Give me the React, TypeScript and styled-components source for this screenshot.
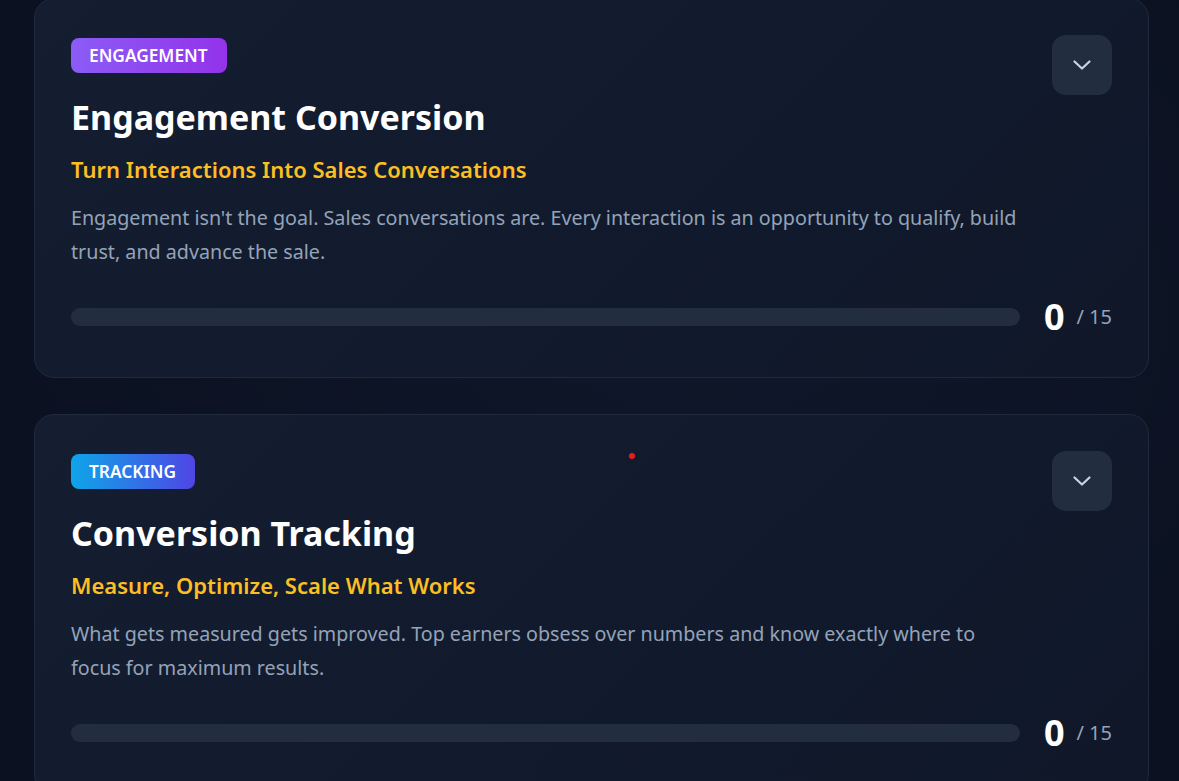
import React from "react";
import styled, { createGlobalStyle } from "styled-components";

const Global = createGlobalStyle`
  html, body { margin: 0; padding: 0; }
  body {
    background: #0b1120;
    font-family: "Noto Sans", "Open Sans", sans-serif;
    overflow: hidden;
  }
`;

const Page = styled.div`
  position: relative;
  display: flex;
  flex-direction: column;
  gap: 36px;
  padding: 0 30px 0 34px;
  margin-top: -2px;
  min-height: 781px;
  background: radial-gradient(ellipse at 60% 40%, #0f172a 0%, #0b1120 70%);
`;

const Card = styled.section`
  position: relative;
  border: 1px solid #1f2a3c;
  border-radius: 20px;
  background: linear-gradient(135deg, #151d30 0%, #111a2c 60%, #0f1729 100%);
  padding: 36px 36px 40px;
  display: flex;
  flex-direction: column;
`;

const Header = styled.div`
  display: flex;
  justify-content: space-between;
  align-items: flex-start;
`;

const Left = styled.div`
  display: flex;
  flex-direction: column;
  align-items: flex-start;
`;

const Badge = styled.span<{ $from: string; $to: string }>`
  margin-top: 3px;
  display: inline-flex;
  align-items: center;
  height: 35px;
  padding: 0 19px 0 18px;
  border-radius: 8px;
  background: linear-gradient(90deg, ${(p) => p.$from}, ${(p) => p.$to});
  color: #ffffff;
  font-size: 17.3px;
  font-weight: 600;
  text-transform: uppercase;
`;

const Title = styled.h2`
  margin: 22px 0 0;
  color: #ffffff;
  font-size: 34px;
  font-weight: 700;
  line-height: 44px;
`;

const Subtitle = styled.h3`
  margin: 16px 0 0;
  color: #fbbf24;
  font-size: 22px;
  font-weight: 600;
  line-height: 28px;
`;

const Desc = styled.p`
  margin: 18px 0 0;
  max-width: 952px;
  color: #94a3b8;
  font-size: 19.7px;
  line-height: 34px;
`;

const ToggleButton = styled.button`
  width: 60px;
  height: 60px;
  border: none;
  border-radius: 14px;
  background: #222d40;
  display: flex;
  align-items: center;
  justify-content: center;
  color: #cbd5e1;
  cursor: pointer;
  flex-shrink: 0;
`;

const ProgressRow = styled.div`
  margin-top: 28px;
  display: flex;
  align-items: center;
  gap: 24px;
`;

const Track = styled.div`
  flex: 1;
  height: 18px;
  border-radius: 9px;
  background: #222d40;
  overflow: hidden;
`;

const Fill = styled.div`
  height: 100%;
  background: linear-gradient(90deg, #8b5cf6, #3b82f6);
`;

const Count = styled.div`
  display: flex;
  align-items: center;
  gap: 12px;
  white-space: nowrap;
`;

const Done = styled.span`
  color: #ffffff;
  font-size: 36px;
  font-weight: 700;
  line-height: 40px;
`;

const Total = styled.span`
  color: #94a3b8;
  font-size: 20px;
  line-height: 28px;
`;

const Dot = styled.span`
  position: absolute;
  left: 629px;
  top: 455px;
  width: 6px;
  height: 6px;
  border-radius: 50%;
  background: #ef1a1a;
`;

const Chevron = () => (
  <svg width="20" height="12" viewBox="0 0 20 12" fill="none" stroke="currentColor" strokeWidth="2.2" strokeLinecap="round" strokeLinejoin="round">
    <path d="M2.5 2.5 L10 9.5 L17.5 2.5" />
  </svg>
);

type Module = {
  tag: string;
  from: string;
  to: string;
  title: string;
  subtitle: string;
  desc: string;
  done: number;
  total: number;
};

const modules: Module[] = [
  {
    tag: "Engagement",
    from: "#8b5cf6",
    to: "#9333ea",
    title: "Engagement Conversion",
    subtitle: "Turn Interactions Into Sales Conversations",
    desc: "Engagement isn't the goal. Sales conversations are. Every interaction is an opportunity to qualify, build trust, and advance the sale.",
    done: 0,
    total: 15,
  },
  {
    tag: "Tracking",
    from: "#0ea5e9",
    to: "#4f46e5",
    title: "Conversion Tracking",
    subtitle: "Measure, Optimize, Scale What Works",
    desc: "What gets measured gets improved. Top earners obsess over numbers and know exactly where to focus for maximum results.",
    done: 0,
    total: 15,
  },
];

export default function App() {
  return (
    <>
      <Global />
      <Page>
        {modules.map((m) => (
          <Card key={m.title}>
            <Header>
              <Left>
                <Badge $from={m.from} $to={m.to}>{m.tag}</Badge>
                <Title>{m.title}</Title>
                <Subtitle>{m.subtitle}</Subtitle>
                <Desc>{m.desc}</Desc>
              </Left>
              <ToggleButton aria-label="Expand">
                <Chevron />
              </ToggleButton>
            </Header>
            <ProgressRow>
              <Track>
                <Fill style={{ width: `${(m.done / m.total) * 100}%` }} />
              </Track>
              <Count>
                <Done>{m.done}</Done>
                <Total>/ {m.total}</Total>
              </Count>
            </ProgressRow>
          </Card>
        ))}
        <Dot />
      </Page>
    </>
  );
}
